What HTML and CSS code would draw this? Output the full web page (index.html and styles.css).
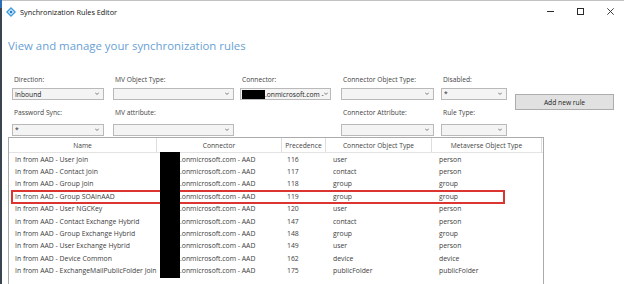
FILE: index.html
```html
<!DOCTYPE html>
<html>
<head>
<meta charset="utf-8">
<title>Synchronization Rules Editor</title>
<link rel="stylesheet" href="styles.css">
</head>
<body>
<div class="edge"></div>
<div class="window">
  <header class="titlebar">
    <svg class="appicon" viewBox="0 0 10 10" width="10" height="10">
      <polygon points="5,0 10,5 5,10 0,5" fill="#3b9be3"/>
      <polygon points="5,2 8,5 5,8 2,5" fill="#ffffff"/>
      <polygon points="5,3.3 6.7,5 5,6.7 3.3,5" fill="#1f78c8"/>
    </svg>
    <span class="title">Synchronization Rules Editor</span>
    <div class="controls">
      <span class="ctl"><span class="min-line"></span></span>
      <span class="ctl"><span class="max-box"></span></span>
      <span class="ctl ctl-close">
        <svg viewBox="0 0 7 7" width="7" height="7"><path d="M0.3 0.3 L6.7 6.7 M6.7 0.3 L0.3 6.7" stroke="#2b2b2b" stroke-width="0.9" fill="none"/></svg>
      </span>
    </div>
  </header>

  <h1 class="heading">View and manage your synchronization rules</h1>

  <div class="filters">
    <label class="lbl">Direction:</label>
    <label class="lbl">MV Object Type:</label>
    <label class="lbl">Connector:</label>
    <label class="lbl">Connector Object Type:</label>
    <label class="lbl">Disabled:</label>
    <button class="addbtn">Add new rule</button>

    <div class="dd w92"><span class="val">Inbound</span><i class="chev"></i></div>
    <div class="dd w121"><span class="val"></span><i class="chev"></i></div>
    <div class="dd w91"><span class="blackout"></span><span class="val">.onmicrosoft.com -</span><i class="chev"></i></div>
    <div class="dd w93"><span class="val"></span><i class="chev"></i></div>
    <div class="dd w66"><span class="val">*</span><i class="chev"></i></div>

    <label class="lbl">Password Sync:</label>
    <label class="lbl">MV attribute:</label>
    <span class="empty"></span>
    <label class="lbl">Connector Attribute:</label>
    <label class="lbl">Rule Type:</label>

    <div class="dd w92"><span class="val">*</span><i class="chev"></i></div>
    <div class="dd w121"><span class="val"></span><i class="chev"></i></div>
    <span class="empty"></span>
    <div class="dd w93"><span class="val"></span><i class="chev"></i></div>
    <div class="dd w66"><span class="val"></span><i class="chev"></i></div>
  </div>

  <div class="rules">
    <div class="row head">
      <div class="hc">Name</div>
      <div class="hc">Connector</div>
      <div class="hc">Precedence</div>
      <div class="hc">Connector Object Type</div>
      <div class="hc">Metaverse Object Type</div>
    </div>
    <div class="row"><div class="c name">In from AAD - User Join</div><div class="c conn">.onmicrosoft.com - AAD</div><div class="c prec">116</div><div class="c cot">user</div><div class="c mvt">person</div></div>
    <div class="row"><div class="c name">In from AAD - Contact Join</div><div class="c conn">.onmicrosoft.com - AAD</div><div class="c prec">117</div><div class="c cot">contact</div><div class="c mvt">person</div></div>
    <div class="row"><div class="c name">In from AAD - Group Join</div><div class="c conn">.onmicrosoft.com - AAD</div><div class="c prec">118</div><div class="c cot">group</div><div class="c mvt">group</div></div>
    <div class="row marked"><div class="c name">In from AAD - Group SOAInAAD</div><div class="c conn">.onmicrosoft.com - AAD</div><div class="c prec">119</div><div class="c cot">group</div><div class="c mvt">group</div></div>
    <div class="row"><div class="c name">In from AAD - User NGCKey</div><div class="c conn">.onmicrosoft.com - AAD</div><div class="c prec">120</div><div class="c cot">user</div><div class="c mvt">person</div></div>
    <div class="row"><div class="c name">In from AAD - Contact Exchange Hybrid</div><div class="c conn">.onmicrosoft.com - AAD</div><div class="c prec">147</div><div class="c cot">contact</div><div class="c mvt">person</div></div>
    <div class="row"><div class="c name">In from AAD - Group Exchange Hybrid</div><div class="c conn">.onmicrosoft.com - AAD</div><div class="c prec">148</div><div class="c cot">group</div><div class="c mvt">group</div></div>
    <div class="row"><div class="c name">In from AAD - User Exchange Hybrid</div><div class="c conn">.onmicrosoft.com - AAD</div><div class="c prec">149</div><div class="c cot">user</div><div class="c mvt">person</div></div>
    <div class="row"><div class="c name">In from AAD - Device Common</div><div class="c conn">.onmicrosoft.com - AAD</div><div class="c prec">162</div><div class="c cot">device</div><div class="c mvt">device</div></div>
    <div class="row"><div class="c name">In from AAD - ExchangeMailPublicFolder Join</div><div class="c conn">.onmicrosoft.com - AAD</div><div class="c prec">175</div><div class="c cot">publicFolder</div><div class="c mvt">publicFolder</div></div>
    <div class="redact"></div>
  </div>
</div>
</body>
</html>
```

FILE: styles.css
```css
*, *::before, *::after { box-sizing: border-box; }

body {
  margin: 0;
  width: 624px;
  height: 284px;
  overflow: hidden;
  display: flex;
  background: #ffffff;
  font-family: "Open Sans", "Noto Sans", sans-serif;
  color: #333333;
}

.edge {
  flex: none;
  width: 2px;
  background: linear-gradient(#2a6fb5 0, #2a6fb5 8px, #3a4350 8px, #3a4350 100%);
}

.window {
  flex: 1;
  display: flex;
  flex-direction: column;
  border-top: 1px solid #c2c2c2;
  min-width: 0;
}

/* Title bar */
.titlebar {
  height: 21px;
  flex: none;
  display: flex;
  align-items: center;
}

.appicon {
  margin-left: 4px;
  flex: none;
}

.title {
  margin-left: 4px;
  font-size: 7.3px;
  color: #111111;
}

.controls {
  margin-left: auto;
  display: flex;
  height: 100%;
}

.ctl {
  width: 30px;
  display: flex;
  align-items: center;
  justify-content: center;
}

.ctl-close { width: 27px; }

.min-line {
  width: 7px;
  height: 1px;
  background: #2b2b2b;
  margin-right: 3px;
}

.max-box {
  width: 7px;
  height: 7px;
  border: 1px solid #2b2b2b;
  margin-right: 3px;
}

/* Heading */
.heading {
  margin: 16px 0 0 6px;
  font-size: 11.4px;
  line-height: 16px;
  font-weight: 400;
  color: #6a9fd5;
  white-space: nowrap;
}

/* Filters */
.filters {
  margin: 18px 0 0 10px;
  display: grid;
  grid-template-columns: 101px 127px 101px 100px 74px 99px;
  grid-template-rows: 14px 12px 20px 12px;
  row-gap: 2px;
  flex: none;
}

.lbl {
  align-self: center;
  padding-left: 2px;
  font-size: 6.7px;
  color: #444444;
  white-space: nowrap;
}

.dd {
  height: 12px;
  border: 1px solid #b9b9b9;
  background: #f4f4f4;
  display: flex;
  align-items: center;
  padding: 0 4px 0 2px;
  font-size: 6.7px;
  color: #222222;
  white-space: nowrap;
}

.w92 { width: 92px; }
.w121 { width: 121px; }
.w91 { width: 91px; padding-left: 1px; }
.w93 { width: 93px; }
.w66 { width: 66px; }

.val { flex: 1; overflow: hidden; }

.blackout {
  flex: none;
  width: 23px;
  height: 9px;
  background: #000000;
}

.w91 .val { flex: none; }

.chev {
  flex: none;
  margin-left: auto;
  width: 4px;
  height: 4px;
  border-right: 1px solid #8a8a8a;
  border-bottom: 1px solid #8a8a8a;
  transform: scale(0.75, 0.6) rotate(45deg);
  margin-top: -2px;
}

.addbtn {
  grid-column: 6;
  grid-row: 1 / 5;
  align-self: start;
  margin-top: 22px;
  width: 99px;
  height: 16px;
  padding: 0;
  border: 1px solid #acacac;
  background: #e1e1e1;
  font-family: inherit;
  font-size: 6.7px;
  color: #222222;
}

/* Rules grid */
.rules {
  position: relative;
  margin: 1px 0 0 6px;
  width: 536px;
  flex: 1;
  border: 1px solid #ababab;
  border-bottom: none;
}

.row {
  display: grid;
  grid-template-columns: 148px 125px 44px 106px 110px;
  height: 12.4px;
  align-items: center;
  font-size: 6.85px;
  white-space: nowrap;
}

.row.head {
  height: 15px;
  border-bottom: 1px solid #e3e3e3;
  color: #444444;
  font-size: 6.7px;
}

.hc {
  height: 100%;
  display: flex;
  align-items: center;
  justify-content: center;
  border-right: 1px solid #dedede;
}

.c {
  overflow: hidden;
  color: #404040;
}

.name { padding-left: 6px; padding-right: 4px; }
.conn { padding-left: 23px; }
.prec { padding-left: 5px; }
.cot { padding-left: 7px; }
.mvt { padding-left: 7px; }

.marked { position: relative; }

.marked::after {
  content: "";
  position: absolute;
  left: 2px;
  top: 0;
  width: 494px;
  height: 13.4px;
  border: 2px solid #dc3430;
}

.redact {
  position: absolute;
  left: 151px;
  top: 14px;
  width: 20px;
  height: 126px;
  background: #000000;
}
```
